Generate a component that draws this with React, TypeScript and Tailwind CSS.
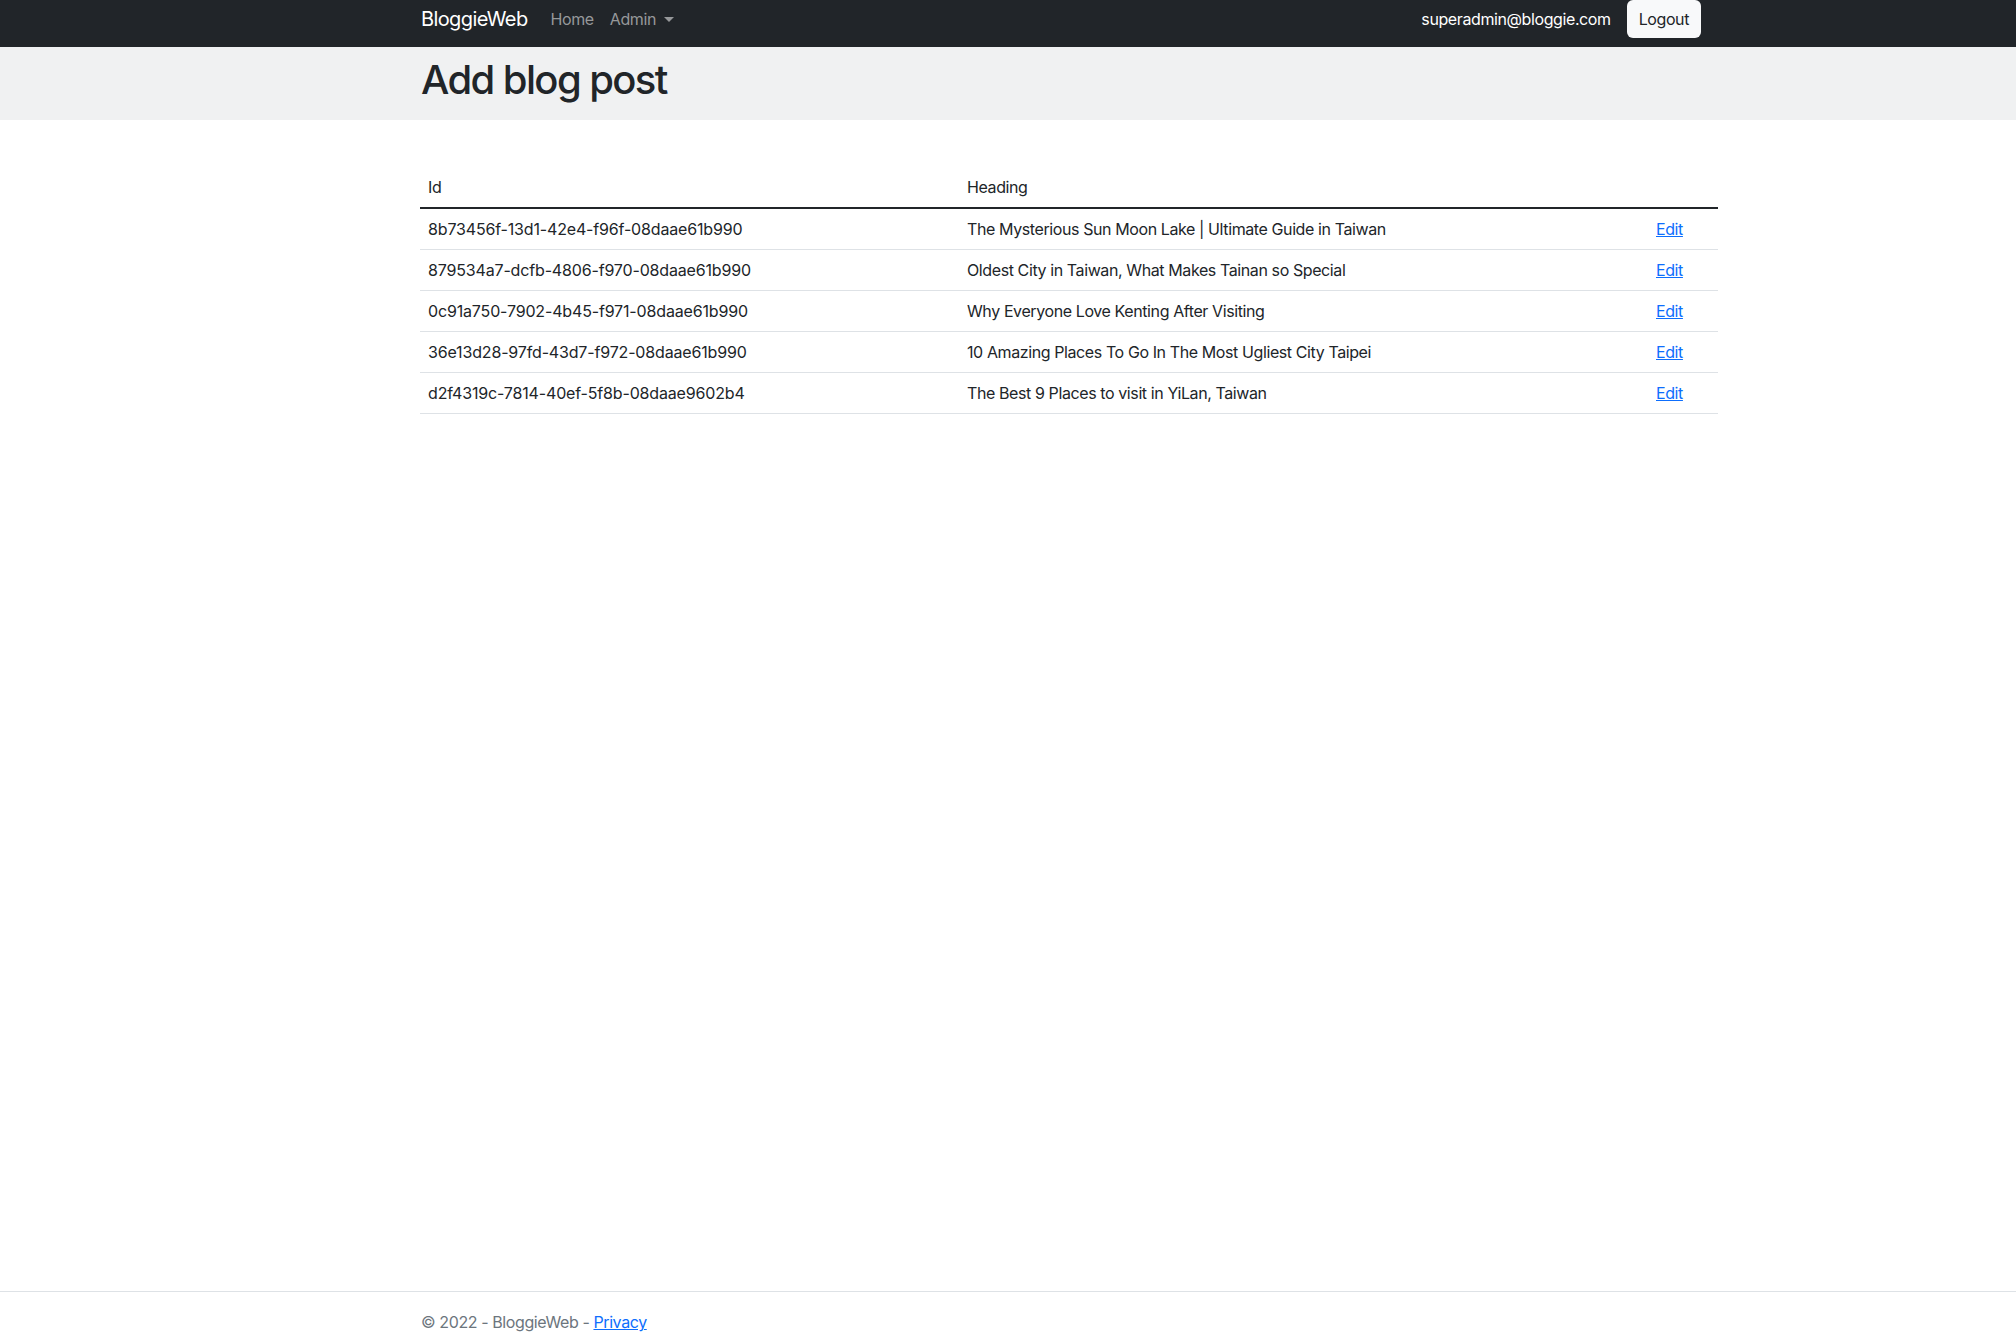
const posts = [
  { id: "8b73456f-13d1-42e4-f96f-08daae61b990", heading: "The Mysterious Sun Moon Lake | Ultimate Guide in Taiwan" },
  { id: "879534a7-dcfb-4806-f970-08daae61b990", heading: "Oldest City in Taiwan, What Makes Tainan so Special" },
  { id: "0c91a750-7902-4b45-f971-08daae61b990", heading: "Why Everyone Love Kenting After Visiting" },
  { id: "36e13d28-97fd-43d7-f972-08daae61b990", heading: "10 Amazing Places To Go In The Most Ugliest City Taipei" },
  { id: "d2f4319c-7814-40ef-5f8b-08daae9602b4", heading: "The Best 9 Places to visit in YiLan, Taiwan" },
];

export default function App() {
  return (
    <div className="flex h-[1344px] flex-col overflow-hidden bg-white font-['Inter',sans-serif] text-[16px] tracking-[-0.025em] text-[#212529]">
      {/* navbar */}
      <nav className="h-[47px] bg-[#212529]">
        <div className="ml-[421px] flex h-[38px] w-[1298px] items-center">
          <a className="mr-[23px] text-[20px] tracking-[-0.03em] text-white">BloggieWeb</a>
          <a className="text-[#96989a]">Home</a>
          <a className="ml-[16px] flex items-center text-[#96989a]">
            Admin
            <span className="ml-[8px] mt-[1px] h-0 w-0 border-x-[5px] border-t-[5px] border-x-transparent border-t-[#96989a]" />
          </a>
          <div className="ml-auto flex items-center">
            <span className="text-white">superadmin@bloggie.com</span>
            <button className="-mt-px ml-[16px] mr-[18px] h-[38px] rounded-[6px] bg-[#f8f9fa] px-[12px] text-[#212529]">
              Logout
            </button>
          </div>
        </div>
      </nav>

      {/* page header */}
      <div className="bg-[#f0f1f2] pb-[16px] pt-[9px]">
        <div className="ml-[421px] w-[1298px]">
          <h1 className="text-[40px] font-medium leading-[48px] tracking-[-0.04em]">Add blog post</h1>
        </div>
      </div>

      {/* table */}
      <main className="flex-1">
        <div className="ml-[420px] mt-[47px] w-[1298px]">
          <table className="w-full table-fixed border-collapse text-left">
            <thead>
              <tr className="border-b-2 border-[#212529]">
                <th className="w-[539px] px-[8px] py-[8px] font-normal leading-[24px]">Id</th>
                <th className="px-[8px] py-[8px] font-normal leading-[24px]">Heading</th>
                <th className="w-[70px] px-[8px] py-[8px] font-normal leading-[24px]"></th>
              </tr>
            </thead>
            <tbody>
              {posts.map((p) => (
                <tr key={p.id} className="border-b border-[#dee2e6]">
                  <td className="px-[8px] py-[8px] leading-[24px] tracking-[-0.01em]">{p.id}</td>
                  <td className="px-[8px] py-[8px] leading-[24px]">{p.heading}</td>
                  <td className="px-[8px] py-[8px] leading-[24px]">
                    <a className="text-[#0d6efd] underline">Edit</a>
                  </td>
                </tr>
              ))}
            </tbody>
          </table>
        </div>
      </main>

      {/* footer */}
      <footer className="h-[53px] overflow-hidden border-t border-[#dee2e6] text-[#6c757d]">
        <div className="ml-[421px] w-[1298px] leading-[60px]">
          © 2022 - BloggieWeb - <a className="text-[#0d6efd] underline">Privacy</a>
        </div>
      </footer>
    </div>
  );
}
